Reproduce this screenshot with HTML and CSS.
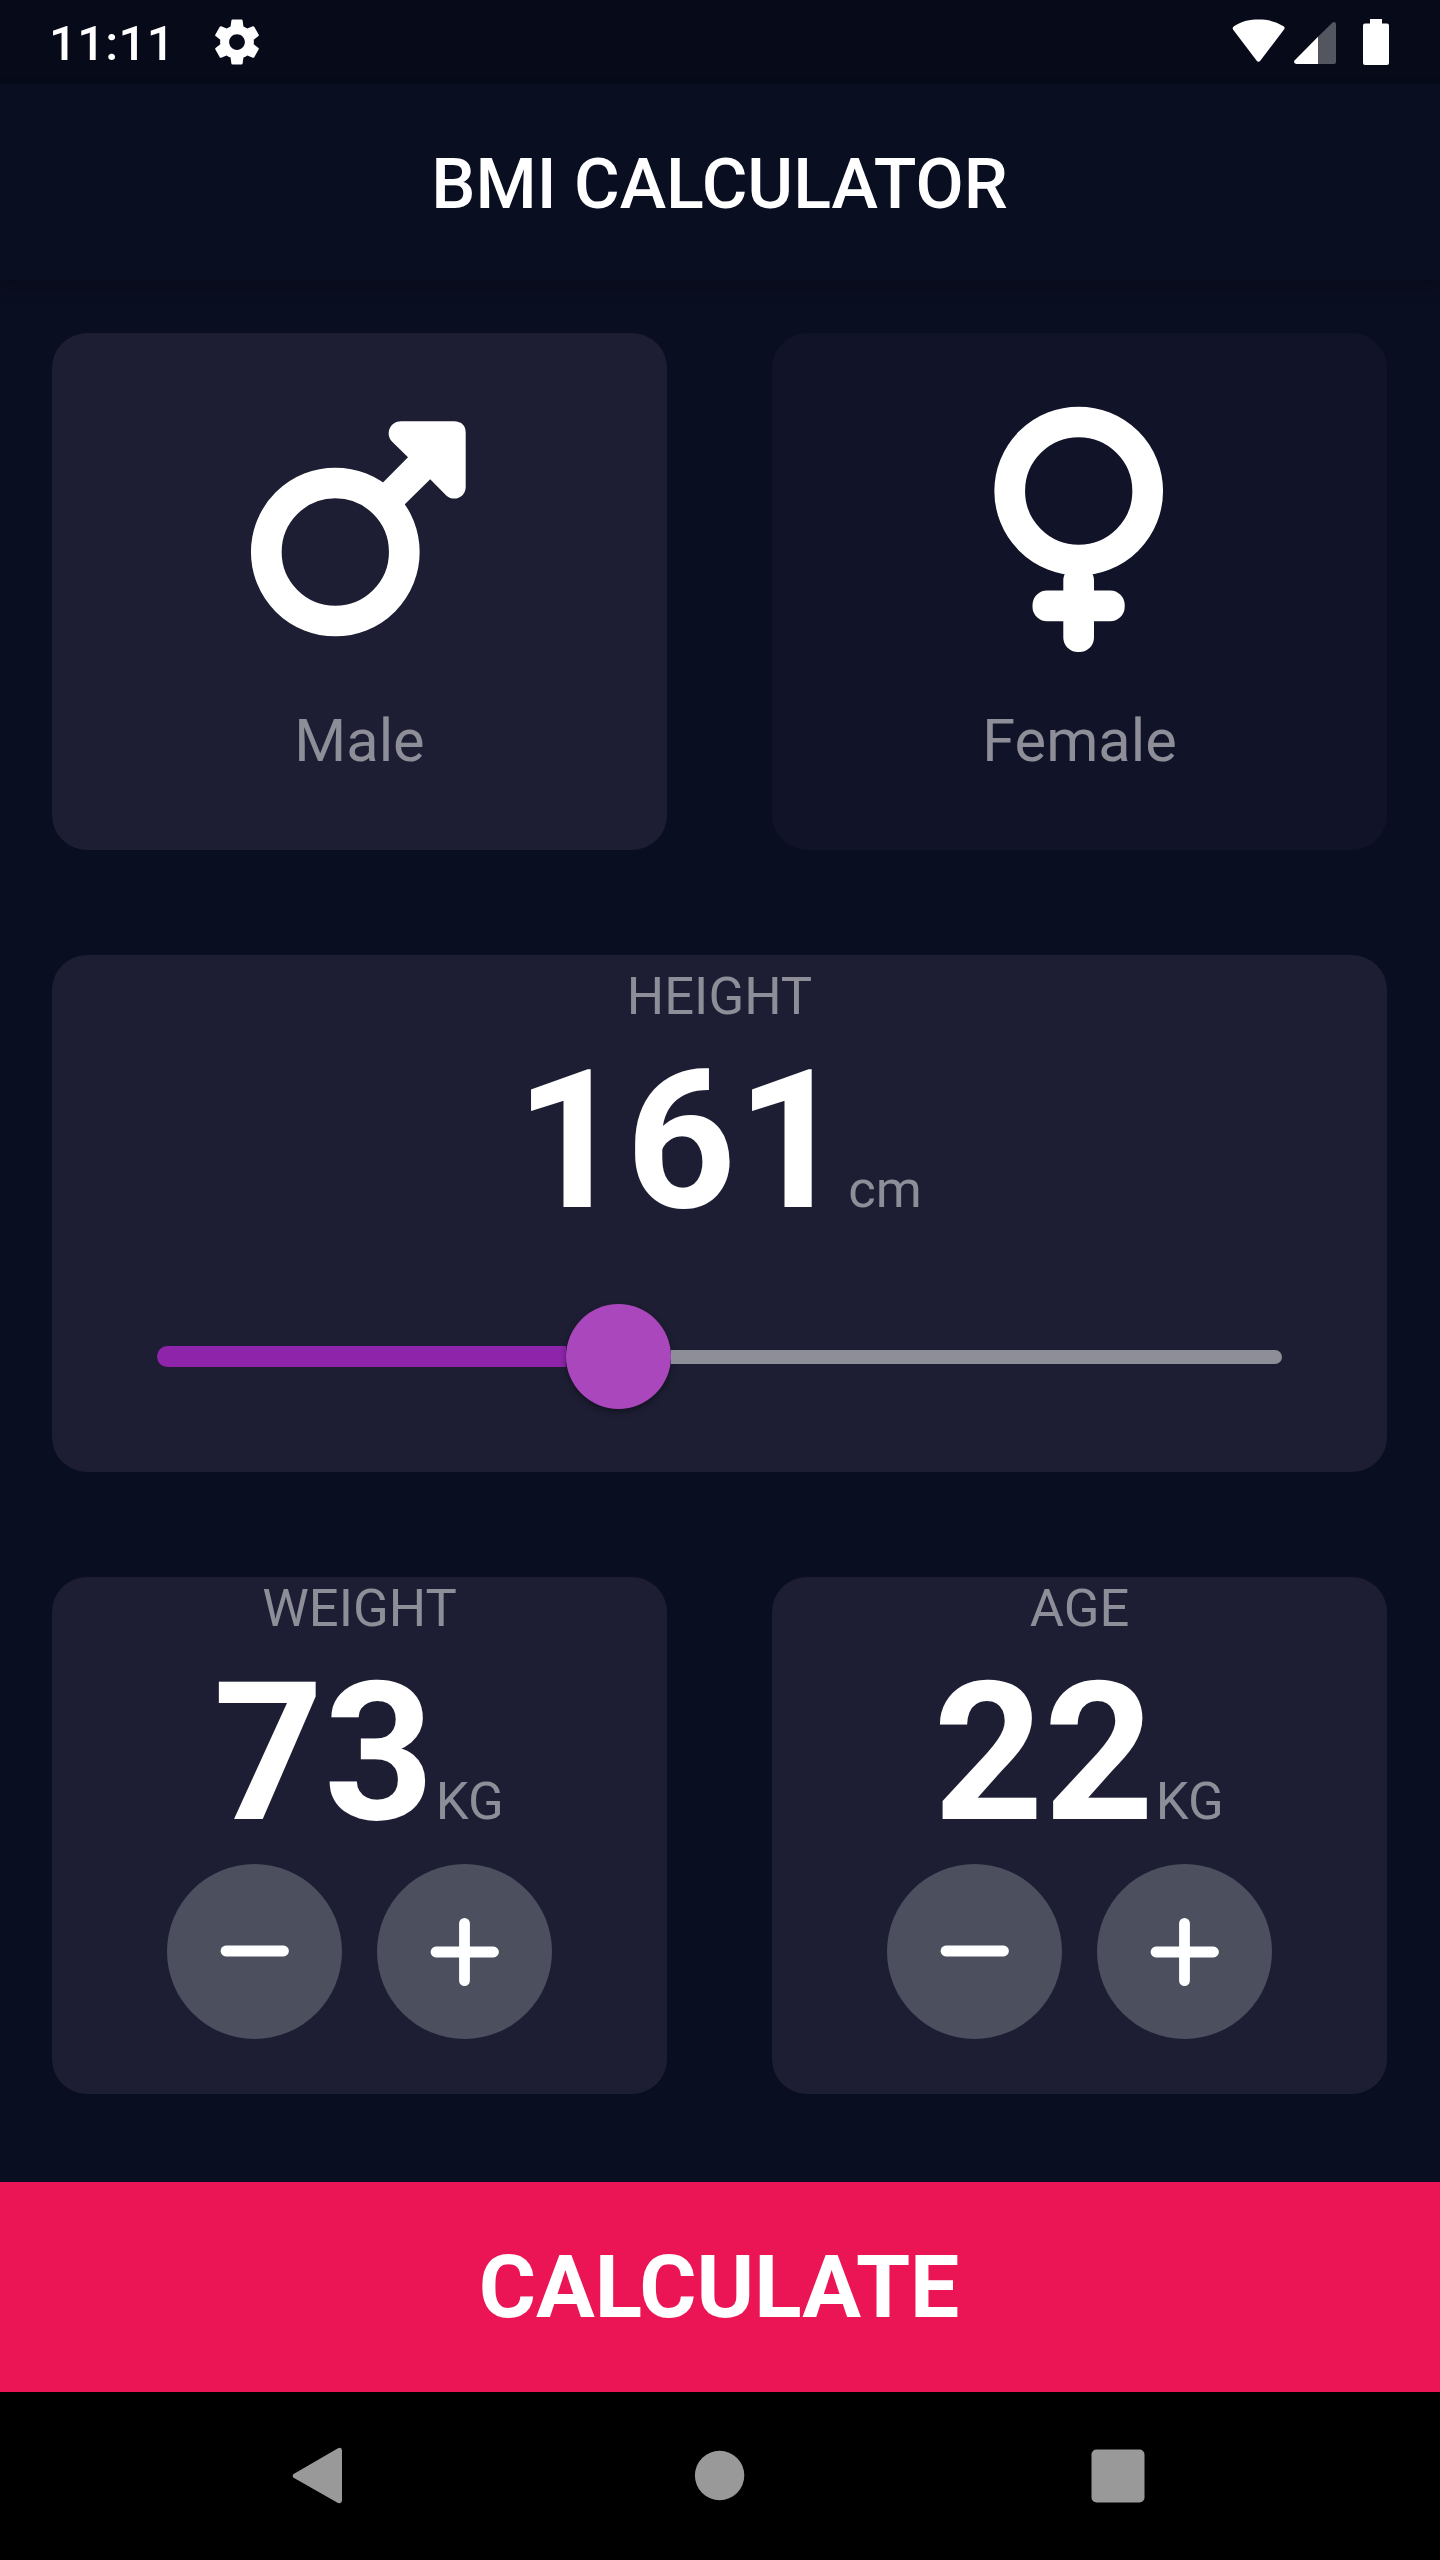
FILE: index.html
```html
<!DOCTYPE html>
<html lang="en">
<head>
<meta charset="utf-8">
<title>BMI Calculator</title>
<link rel="stylesheet" href="styles.css">
</head>
<body>
<div class="screen">
  <div class="status-bar">
    <span class="clock">11:11</span>
    <svg class="gear" viewBox="0 0 24 24"><path fill="#fff" d="M19.43 12.98c.04-.32.07-.64.07-.98s-.03-.66-.07-.98l2.11-1.65c.19-.15.24-.42.12-.64l-2-3.46c-.12-.22-.39-.3-.61-.22l-2.49 1c-.52-.4-1.08-.73-1.69-.98l-.38-2.65C14.46 2.18 14.25 2 14 2h-4c-.25 0-.46.18-.49.42l-.38 2.65c-.61.25-1.17.59-1.69.98l-2.49-1c-.23-.09-.49 0-.61.22l-2 3.46c-.13.22-.07.49.12.64l2.11 1.65c-.04.32-.07.65-.07.98s.03.66.07.98l-2.11 1.65c-.19.15-.24.42-.12.64l2 3.46c.12.22.39.3.61.22l2.49-1c.52.4 1.08.73 1.69.98l.38 2.65c.03.24.24.42.49.42h4c.25 0 .46-.18.49-.42l.38-2.65c.61-.25 1.17-.59 1.69-.98l2.49 1c.23.09.49 0 .61-.22l2-3.46c.12-.22.07-.49-.12-.64l-2.11-1.65zM12 15.5c-1.93 0-3.5-1.57-3.5-3.5s1.570-3.500 3.500-3.500 3.500 1.570 3.500 3.500-1.570 3.500-3.500 3.500z"/></svg>
    <svg class="indicators" viewBox="0 0 158 48"><path fill="#fff" d="M1 11.500Q0 9.500 2 8.300C10 3 18 1.600 26.500 1.600S43 3 51.500 8.300Q53.500 9.500 52 11.500L28.500 42.500Q26.500 45 24.500 42.500Z"/><path fill="#fff" d="M86 18.700V46H64.500Q61 45 62.500 42.500Z"/><path fill="#53555f" d="M86 18.700L100.500 4.500Q103 3 104 5.500V44Q104 46 102 46H86Z"/><path fill="#fff" d="M138 1H150V5.500H155Q157 5.500 157 7.500V45Q157 47 155 47H133Q131 47 131 45V7.500Q131 5.500 133 5.500H138Z"/></svg>
  </div>
  <header class="app-bar"><h1 class="title">BMI CALCULATOR</h1></header>
  <main class="content">
    <section class="row">
      <div class="card gender">
        <svg class="gender-icon" viewBox="0 0 245 245"><circle cx="98.300" cy="146" r="69" fill="none" stroke="#fff" stroke-width="30.700"/><path fill="#fff" d="M171 51.300L155.200 35.700C148 28.500 152.500 15.300 164.200 15.300H217Q228.700 15.700 228.700 27V81C228.700 91.500 217 96 209.500 89.700L193.200 73.300L163 103L141 81.500Z"/></svg>
        <span class="gender-label">Male</span>
      </div>
      <div class="card gender inactive">
        <svg class="gender-icon" viewBox="0 0 245 245"><circle cx="121.700" cy="85" r="69" fill="none" stroke="#fff" stroke-width="30.700"/><rect x="106.300" y="160" width="30.700" height="86" rx="14.500" fill="#fff"/><rect x="75.500" y="184.500" width="92.200" height="30.700" rx="14.500" fill="#fff"/></svg>
        <span class="gender-label">Female</span>
      </div>
    </section>
    <section class="row">
      <div class="card height">
        <span class="label">HEIGHT</span>
        <div class="value"><span class="number">161</span><span class="unit">cm</span></div>
        <div class="slider">
          <div class="active"></div>
          <div class="thumb"></div>
          <div class="rest"></div>
        </div>
      </div>
    </section>
    <section class="row">
      <div class="card">
        <span class="label">WEIGHT</span>
        <div class="value"><span class="number">73</span><span class="unit">KG</span></div>
        <div class="buttons">
          <button class="round"><svg viewBox="0 0 175 175"><path d="M59 87H116.500"/></svg></button>
          <button class="round"><svg viewBox="0 0 175 175"><path d="M59 88H116.500M87.500 59.300V116.700"/></svg></button>
        </div>
      </div>
      <div class="card">
        <span class="label">AGE</span>
        <div class="value"><span class="number">22</span><span class="unit">KG</span></div>
        <div class="buttons">
          <button class="round"><svg viewBox="0 0 175 175"><path d="M59 87H116.500"/></svg></button>
          <button class="round"><svg viewBox="0 0 175 175"><path d="M59 88H116.500M87.500 59.300V116.700"/></svg></button>
        </div>
      </div>
    </section>
  </main>
  <button class="calculate">CALCULATE</button>
  <nav class="nav-bar">
    <svg class="nav-icon" viewBox="0 0 60 60"><path fill="#999" d="M5.200 28.300L50 2.200Q53.500 1 54 4.200V54.800Q53.500 58 50 57L5.200 31.500Q4 30 5.200 28.300Z"/></svg>
    <svg class="nav-icon" viewBox="0 0 60 60"><circle cx="31.600" cy="29.500" r="24.700" fill="#999"/></svg>
    <svg class="nav-icon" viewBox="0 0 60 60"><rect x="3.500" y="3.500" width="53" height="53" rx="5" fill="#999"/></svg>
  </nav>
</div>
</body>
</html>
```
FILE: styles.css
```css
* { box-sizing: border-box; }
body { margin: 0; background: #0a0e21; font-family: Roboto, sans-serif; color: #fff; }
button { border: 0; padding: 0; font: inherit; color: inherit; }
svg { display: block; overflow: visible; }

.screen { width: 1440px; height: 2560px; display: flex; flex-direction: column; background: #0a0e21; }

.status-bar { height: 84px; flex: none; display: flex; align-items: center; padding: 0 50px 0 49px; background: #070a18; }
.clock { width: 161px; font-size: 49px; font-weight: 500; line-height: 58px; padding-top: 3px; letter-spacing: 0.3px; }
.gear { width: 54px; height: 54px; }
.indicators { width: 158px; height: 48px; margin-left: auto; }

.app-bar { height: 196px; flex: none; display: flex; align-items: center; justify-content: center; padding: 4px 1px 0 0; background: #0a0e21; box-shadow: 0 8px 14px rgba(0, 0, 0, 0.24); }
.title { margin: 0; font-size: 70px; font-weight: 500; line-height: 82px; }

.content { height: 1902px; flex: none; padding-bottom: 35px; display: grid; grid-template-rows: repeat(3, 1fr); }
.row { display: flex; gap: 105px; padding: 52.5px 53px 52.5px 52px; min-height: 0; }
.card { flex: 1; display: flex; flex-direction: column; align-items: center; border-radius: 35px; background: #1d1e33; }
.card.inactive { background: #111328; }

.gender { padding-top: 73.5px; }
.gender-icon { width: 245px; height: 245px; }
.gender-label { margin-top: 55px; font-size: 59.5px; line-height: 70px; color: #8d8e98; }

.height { padding-top: 10.5px; }
.label { font-size: 52.5px; line-height: 62px; color: #8d8e98; }
.value { height: 225px; padding-top: 1px; display: flex; align-items: baseline; line-height: 226px; }
.number { margin: 0 1.5px 0 -2px; font-size: 192.5px; font-weight: 700; }
.unit { font-size: 52.5px; color: #8d8e98; }

.slider { width: 1125px; height: 105px; margin-top: 52px; display: flex; align-items: center; }
.active { width: 409px; height: 21px; border-radius: 10.5px 0 0 10.5px; background: #8e24aa; }
.thumb { width: 105px; height: 105px; border-radius: 50%; background: #ab47bc; box-shadow: 0 3px 6px rgba(0, 0, 0, 0.4); }
.rest { flex: 1; height: 14px; border-radius: 0 7px 7px 0; background: #8d8e98; }

.buttons { display: flex; gap: 35px; }
.round { width: 175px; height: 175px; border-radius: 50%; background: #4c4f5e; }
.round svg { width: 175px; height: 175px; fill: none; stroke: #fff; stroke-width: 10.800px; stroke-linecap: round; }

.calculate { height: 210px; flex: none; padding-right: 2px; background: #eb1555; font-size: 87.5px; font-weight: 700; line-height: 104px; text-align: center; }

.nav-bar { height: 168px; flex: none; display: flex; justify-content: space-between; align-items: center; padding: 0 292px 0 288px; background: #000; }
.nav-icon { width: 60px; height: 60px; }
```
